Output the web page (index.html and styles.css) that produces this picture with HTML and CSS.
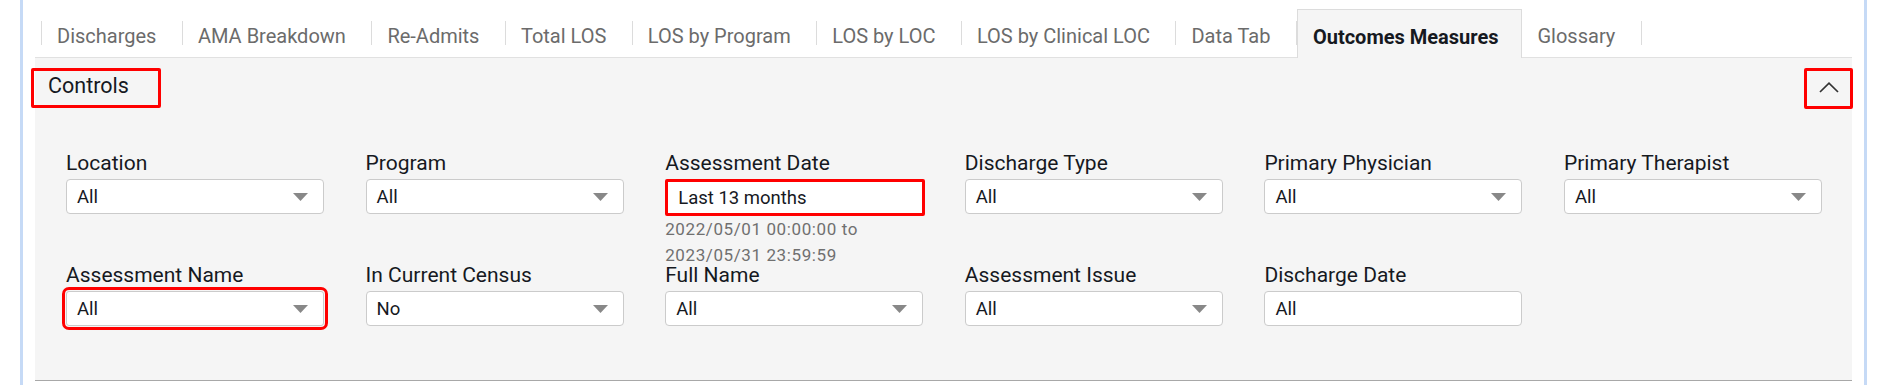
FILE: index.html
```html
<!DOCTYPE html>
<html lang="en">
<head>
  <meta charset="UTF-8">
  <meta name="viewport" content="width=device-width, initial-scale=1.0">
  <title>Outcomes Measures</title>
  <link rel="stylesheet" href="styles.css">
</head>
<body>
  <div class="frame">
    <!-- Sheet tabs -->
    <div class="tabs">
      <div class="tab">Discharges</div>
      <div class="tab">AMA Breakdown</div>
      <div class="tab">Re-Admits</div>
      <div class="tab">Total LOS</div>
      <div class="tab">LOS by Program</div>
      <div class="tab">LOS by LOC</div>
      <div class="tab">LOS by Clinical LOC</div>
      <div class="tab">Data Tab</div>
      <div class="tab active">Outcomes Measures</div>
      <div class="tab">Glossary</div>
    </div>

    <!-- Controls panel -->
    <div class="panel">
      <div class="panel-head">
        <div class="panel-title">Controls</div>
        <button class="collapse" type="button" aria-label="Collapse controls">
          <svg width="20" height="11" viewBox="0 0 20 11"><path d="M1 10 L10 1.2 L19 10" fill="none" stroke="#333" stroke-width="1.7"/></svg>
        </button>
      </div>

      <div class="filters">
        <div class="field">
          <div class="label">Location</div>
          <div class="select"><span>All</span><svg class="caret" width="15" height="8" viewBox="0 0 15 8"><path d="M0 0H15L7.5 8Z" fill="#888"/></svg></div>
        </div>
        <div class="field">
          <div class="label">Program</div>
          <div class="select"><span>All</span><svg class="caret" width="15" height="8" viewBox="0 0 15 8"><path d="M0 0H15L7.5 8Z" fill="#888"/></svg></div>
        </div>
        <div class="field">
          <div class="label">Assessment Date</div>
          <div class="select date flagged"><span>Last 13 months</span></div>
          <div class="hint">2022/05/01 00:00:00 to<br>2023/05/31 23:59:59</div>
        </div>
        <div class="field">
          <div class="label">Discharge Type</div>
          <div class="select"><span>All</span><svg class="caret" width="15" height="8" viewBox="0 0 15 8"><path d="M0 0H15L7.5 8Z" fill="#888"/></svg></div>
        </div>
        <div class="field">
          <div class="label">Primary Physician</div>
          <div class="select"><span>All</span><svg class="caret" width="15" height="8" viewBox="0 0 15 8"><path d="M0 0H15L7.5 8Z" fill="#888"/></svg></div>
        </div>
        <div class="field">
          <div class="label">Primary Therapist</div>
          <div class="select"><span>All</span><svg class="caret" width="15" height="8" viewBox="0 0 15 8"><path d="M0 0H15L7.5 8Z" fill="#888"/></svg></div>
        </div>

        <div class="field">
          <div class="label">Assessment Name</div>
          <div class="select outlined"><span>All</span><svg class="caret" width="15" height="8" viewBox="0 0 15 8"><path d="M0 0H15L7.5 8Z" fill="#888"/></svg></div>
        </div>
        <div class="field">
          <div class="label">In Current Census</div>
          <div class="select"><span>No</span><svg class="caret" width="15" height="8" viewBox="0 0 15 8"><path d="M0 0H15L7.5 8Z" fill="#888"/></svg></div>
        </div>
        <div class="field">
          <div class="label">Full Name</div>
          <div class="select"><span>All</span><svg class="caret" width="15" height="8" viewBox="0 0 15 8"><path d="M0 0H15L7.5 8Z" fill="#888"/></svg></div>
        </div>
        <div class="field">
          <div class="label">Assessment Issue</div>
          <div class="select"><span>All</span><svg class="caret" width="15" height="8" viewBox="0 0 15 8"><path d="M0 0H15L7.5 8Z" fill="#888"/></svg></div>
        </div>
        <div class="field">
          <div class="label">Discharge Date</div>
          <div class="select"><span>All</span></div>
        </div>
      </div>
    </div>
  </div>
</body>
</html>
```

FILE: styles.css
```css
body {
  margin: 0;
  background: #fff;
  font-family: Roboto, "Noto Sans", sans-serif;
  color: #16191f;
}

/* Outer frame with the light blue edges */
.frame {
  box-sizing: border-box;
  width: 1847px;
  min-height: 100vh;
  margin-left: 20px;
  padding: 9px 12px 0;
  border-left: 3px solid #c6daf6;
  border-right: 3px solid #c6daf6;
}

/* Tabs */
.tabs {
  display: flex;
  height: 48px;
  padding-left: 6px;
}

.tabs::before {
  content: "";
  align-self: flex-start;
  width: 1px;
  height: 24px;
  margin-top: 12px;
  background: #dcdcdc;
}

.tab {
  position: relative;
  display: flex;
  align-items: center;
  box-sizing: border-box;
  padding: 5px 26.5px 0 15px;
  font-size: 20px;
  color: #6b6b6b;
  white-space: nowrap;
}

.tab::after {
  content: "";
  position: absolute;
  right: 0;
  top: 12px;
  width: 1px;
  height: 24px;
  background: #dcdcdc;
}

.tab.active {
  z-index: 1;
  margin-bottom: -1px;
  padding: 5px 23px 0 15px;
  background: #f5f5f5;
  border: 1px solid #dcdcdc;
  border-bottom: none;
  color: #16191f;
  font-weight: bold;
}

.tab.active::after {
  display: none;
}

/* Controls panel */
.panel {
  background: #f5f5f5;
  border-top: 1px solid #e1e1e1;
  border-bottom: 1px solid #a8a8a8;
  padding-top: 10px;
}

.panel-head {
  display: flex;
  justify-content: space-between;
  margin: 0 -1px 0 -4px;
}

.panel-title {
  box-sizing: border-box;
  width: 130px;
  height: 40px;
  padding: 3px 0 0 14px;
  border: 3px solid #f00;
  border-radius: 2px;
  font-size: 21.5px;
  line-height: 24px;
}

.collapse {
  display: flex;
  align-items: center;
  justify-content: center;
  box-sizing: border-box;
  width: 49px;
  height: 41px;
  padding: 0 0 3px;
  border: 3px solid #f00;
  border-radius: 2px;
  background: transparent;
}

.filters {
  display: grid;
  grid-template-columns: repeat(6, 258px);
  column-gap: 41.6px;
  align-items: start;
  padding: 42px 31px 54px;
}

.label {
  font-size: 21px;
  line-height: 24px;
  margin-bottom: 4px;
  white-space: nowrap;
}

.select {
  display: flex;
  align-items: center;
  justify-content: space-between;
  box-sizing: border-box;
  height: 35px;
  padding: 1px 15px 0 10px;
  background: #fff;
  border: 1px solid #cbcbcb;
  border-radius: 4px;
  font-size: 18.5px;
}

.select.flagged {
  width: 260px;
  height: 37px;
  padding-left: 10px;
  border: 3px solid #f00;
  border-radius: 2px;
}

.select.outlined {
  outline: 3px solid #f00;
  outline-offset: 1px;
  border-radius: 3px;
}

.hint {
  margin-bottom: -5px;
  font-size: 17px;
  letter-spacing: 0.6px;
  line-height: 26px;
  color: #707070;
}
```
